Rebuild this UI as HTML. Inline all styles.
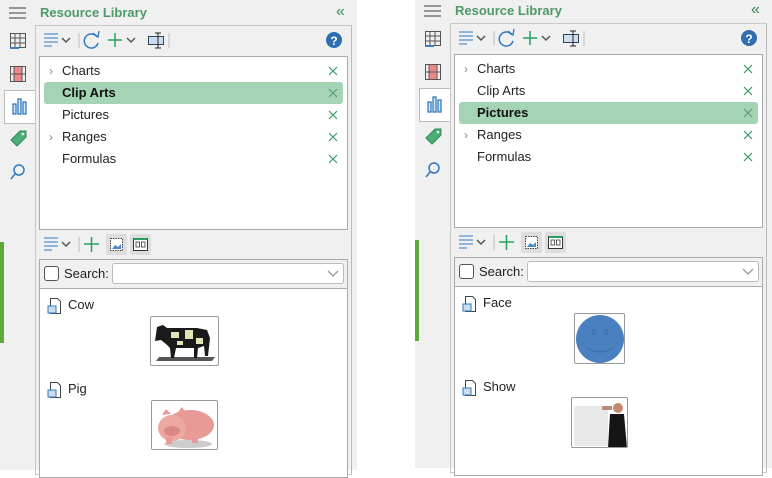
<!DOCTYPE html><html><head><style>
*{margin:0;padding:0;box-sizing:border-box}
body{width:772px;height:464px;background:#fff;position:relative;overflow:hidden;font-family:"Liberation Sans",sans-serif;font-size:13px;color:#222}
.p{position:absolute;width:357px;height:470px;background:#f0f0f0}
.a{position:absolute}
.tl{left:40px;top:5px;color:#4c9a68;font-weight:bold;font-size:13px}
.box{position:absolute;left:35px;top:25px;width:317px;height:450px;border:1px solid #c8c8c8;border-right:1px solid #bbb}
.list{position:absolute;left:39px;top:56px;width:309px;height:174px;background:#fff;border:1px solid #aaa}
.row{position:absolute;left:4px;width:299px;height:22px;line-height:22px;padding-left:18px}
.row.sel{background:#a4d4b4;border-radius:3px;font-weight:bold;color:#111}
.x{position:absolute;right:5px;top:6px;width:10px;height:10px}
.chev{position:absolute;left:5px;top:0;color:#888;font-size:12px}
.srch{position:absolute;left:39px;top:259px;width:309px;height:30px;border:1px solid #aaa;background:#f0f0f0}
.cont{position:absolute;left:39px;top:288px;width:309px;height:190px;background:#fff;border:1px solid #aaa}
.img{position:absolute;border:1px solid #999;border-radius:2px;background:#fff;overflow:hidden}
</style></head><body>

<div class="p" style="left:0;top:0">
<svg class="a" style="left:0;top:0" width="40" height="200">
<g stroke="#777" stroke-width="1.6"><line x1="9" y1="8" x2="26" y2="8"/><line x1="9" y1="13" x2="26" y2="13"/><line x1="9" y1="18" x2="26" y2="18"/></g>
<g fill="none" stroke="#555" stroke-width="1"><rect x="10.5" y="33.5" width="15" height="14"/><path d="M10.5 38h15M10.5 43h15M15 33.5v14M20 33.5v14"/></g><path d="M10 48h9" stroke="#3a7fc4" stroke-width="2"/>
<rect x="10.5" y="66.5" width="15" height="15" fill="none" stroke="#555"/><rect x="14" y="67" width="8" height="14" fill="#e88"/><path d="M14 67v14M22 67v14M10.5 74h15" stroke="#555"/>
</svg>
<div class="a" style="left:4px;top:90px;width:32px;height:34px;background:#fff;border:1px solid #bbb;border-right:none"></div>
<svg class="a" style="left:0;top:0" width="40" height="200">
<g fill="#dce9f5" stroke="#2f7ac0" stroke-width="1.3"><rect x="13" y="104" width="3" height="10"/><rect x="18" y="99" width="3" height="15"/><rect x="23" y="102" width="3" height="12"/></g>
<path d="M11 140l9-9h6v6l-9 9z" fill="#4cae76" stroke="#2e8a57"/><circle cx="23" cy="134" r="1.3" fill="#fff"/>
<circle cx="19" cy="170" r="5" fill="none" stroke="#2f7ac0" stroke-width="1.5"/><path d="M15 174l-4 5" stroke="#2f7ac0" stroke-width="1.5"/>
</svg>
<div class="a" style="left:0;top:242px;width:4px;height:101px;background:#5fa83a"></div>
<div class="tl a">Resource Library</div>
<div class="a" style="left:336px;top:3px;color:#3a8a5a;font-size:16px">«</div>
<div class="box"></div>
<svg class="a" style="left:36px;top:28px" width="315" height="26">
<g stroke="#2f7ac0" stroke-width="1"><path d="M8 6h14M8 10h14M8 14h14M8 18h8"/></g><path d="M26 10l4 4 4-4" fill="none" stroke="#555" stroke-width="1.5"/>
<path d="M43 5v15" stroke="#bbb"/>
<path d="M61 9a7 7 0 1 0 1 6" fill="none" stroke="#2f7ac0" stroke-width="1.5"/><path d="M57 5l5 4 1-6" fill="none" stroke="#2f7ac0" stroke-width="1.3"/>
<path d="M72 12h14M79 5v14" stroke="#2aa060" stroke-width="1.5"/><path d="M91 10l4 4 4-4" fill="none" stroke="#555" stroke-width="1.5"/>
<rect x="112.5" y="8.5" width="15" height="8" fill="#cde" stroke="#345"/><path d="M122 5v15M119 5h6M119 20h6" stroke="#222"/>
<path d="M133 5v15" stroke="#bbb"/>
<circle cx="298" cy="12" r="8" fill="#2f6eb0"/><text x="298" y="17" font-size="12" font-weight="bold" fill="#fff" text-anchor="middle" font-family="Liberation Sans">?</text>
</svg>
<div class="list">
<div class="row" style="top:3px"><span class="chev">›</span>Charts<svg class="x"><path d="M1 1l8 8M9 1l-8 8" stroke="#3a9a6a" stroke-width="1.2"/></svg></div>
<div class="row sel" style="top:25px">Clip Arts<svg class="x"><path d="M1 1l8 8M9 1l-8 8" stroke="#5a9a78" stroke-width="1.2"/></svg></div>
<div class="row" style="top:47px">Pictures<svg class="x"><path d="M1 1l8 8M9 1l-8 8" stroke="#3a9a6a" stroke-width="1.2"/></svg></div>
<div class="row" style="top:69px"><span class="chev">›</span>Ranges<svg class="x"><path d="M1 1l8 8M9 1l-8 8" stroke="#3a9a6a" stroke-width="1.2"/></svg></div>
<div class="row" style="top:91px">Formulas<svg class="x"><path d="M1 1l8 8M9 1l-8 8" stroke="#3a9a6a" stroke-width="1.2"/></svg></div>
</div>
<svg class="a" style="left:36px;top:232px" width="120" height="26">
<g stroke="#2f7ac0" stroke-width="1"><path d="M8 6h14M8 10h14M8 14h14M8 18h8"/></g><path d="M26 10l4 4 4-4" fill="none" stroke="#555" stroke-width="1.5"/>
<path d="M43 5v15" stroke="#bbb"/><path d="M48 12h15M55.5 5v15" stroke="#2aa060" stroke-width="1.5"/>
<rect x="70" y="2" width="21" height="21" rx="2" fill="#ddd"/><rect x="74.5" y="6.5" width="12" height="12" fill="#fff" stroke="#444" stroke-dasharray="1.5 1"/><path d="M76 17l3-4 3 2 3-3v5z" fill="#4a8ac8"/>
<rect x="94" y="2" width="21" height="21" rx="2" fill="#ddd"/><rect x="97.5" y="6.5" width="14" height="12" fill="#fff" stroke="#333"/><path d="M97.5 7h14" stroke="#2aa060" stroke-width="2"/><rect x="100" y="10" width="3.5" height="5" fill="none" stroke="#333" stroke-width=".8"/><rect x="105.5" y="10" width="3.5" height="5" fill="none" stroke="#333" stroke-width=".8"/>
</svg>
<div class="srch">
<div class="a" style="left:4px;top:6px;width:15px;height:15px;border:1px solid #555;border-radius:3px;background:#fff"></div>
<div class="a" style="left:24px;top:6px">Search:</div>
<div class="a" style="left:72px;top:3px;width:232px;height:21px;border:1px solid #bbb;border-radius:3px;background:#fff"><svg class="a" style="right:4px;top:6px" width="12" height="8"><path d="M1 1l5 5 5-5" fill="none" stroke="#999" stroke-width="1.3"/></svg></div>
</div>
<div class="cont">
<svg class="a" style="left:7px;top:8px" width="18" height="18"><path d="M3.5 1.5h7l3 3v12h-10z" fill="#fff" stroke="#444"/><rect x="1" y="9" width="8" height="7" fill="#cde" stroke="#2f7ac0"/></svg>
<div class="a" style="left:28px;top:8px">Cow</div>
<div class="img" style="left:110px;top:27px;width:69px;height:50px">
<svg width="69" height="50"><path d="M8 40h56l-3 4H5z" fill="#555"/><path d="M6 10l6-2 4 3h30l10 2 3 8-2 18h-3l-1-10-6 2-1 10h-3v-10h-18l-2 10h-3l-1-10-4-4-5-4-6 1z" fill="#1a1a1a"/><path d="M20 15h8v6h-8zM34 13h8v9h-8zM45 21h7v6h-7zM26 24h6v4h-6z" fill="#e2e4b8"/></svg></div>
<svg class="a" style="left:7px;top:92px" width="18" height="18"><path d="M3.5 1.5h7l3 3v12h-10z" fill="#fff" stroke="#444"/><rect x="1" y="9" width="8" height="7" fill="#cde" stroke="#2f7ac0"/></svg>
<div class="a" style="left:28px;top:92px">Pig</div>
<div class="img" style="left:111px;top:111px;width:67px;height:50px">
<svg width="67" height="50"><ellipse cx="36" cy="43" rx="24" ry="4" fill="#ccc"/><ellipse cx="38" cy="24" rx="24" ry="15" fill="#e99a96"/><ellipse cx="20" cy="27" rx="14" ry="13" fill="#eda8a2"/><ellipse cx="20" cy="30" rx="8" ry="5" fill="#d98884"/><path d="M10 14l4-6 5 5zM26 11l4-5 4 6z" fill="#e99a96"/><rect x="14" y="36" width="6" height="7" fill="#e99a96"/><rect x="40" y="35" width="6" height="7" fill="#e99a96"/></svg></div>
</div>
</div>

<div class="p" style="left:415px;top:-2px">
<svg class="a" style="left:0;top:0" width="40" height="200">
<g stroke="#777" stroke-width="1.6"><line x1="9" y1="8" x2="26" y2="8"/><line x1="9" y1="13" x2="26" y2="13"/><line x1="9" y1="18" x2="26" y2="18"/></g>
<g fill="none" stroke="#555" stroke-width="1"><rect x="10.5" y="33.5" width="15" height="14"/><path d="M10.5 38h15M10.5 43h15M15 33.5v14M20 33.5v14"/></g><path d="M10 48h9" stroke="#3a7fc4" stroke-width="2"/>
<rect x="10.5" y="66.5" width="15" height="15" fill="none" stroke="#555"/><rect x="14" y="67" width="8" height="14" fill="#e88"/><path d="M14 67v14M22 67v14M10.5 74h15" stroke="#555"/>
</svg>
<div class="a" style="left:4px;top:90px;width:32px;height:34px;background:#fff;border:1px solid #bbb;border-right:none"></div>
<svg class="a" style="left:0;top:0" width="40" height="200">
<g fill="#dce9f5" stroke="#2f7ac0" stroke-width="1.3"><rect x="13" y="104" width="3" height="10"/><rect x="18" y="99" width="3" height="15"/><rect x="23" y="102" width="3" height="12"/></g>
<path d="M11 140l9-9h6v6l-9 9z" fill="#4cae76" stroke="#2e8a57"/><circle cx="23" cy="134" r="1.3" fill="#fff"/>
<circle cx="19" cy="170" r="5" fill="none" stroke="#2f7ac0" stroke-width="1.5"/><path d="M15 174l-4 5" stroke="#2f7ac0" stroke-width="1.5"/>
</svg>
<div class="a" style="left:0;top:242px;width:4px;height:101px;background:#5fa83a"></div>
<div class="tl a">Resource Library</div>
<div class="a" style="left:336px;top:3px;color:#3a8a5a;font-size:16px">«</div>
<div class="box"></div>
<svg class="a" style="left:36px;top:28px" width="315" height="26">
<g stroke="#2f7ac0" stroke-width="1"><path d="M8 6h14M8 10h14M8 14h14M8 18h8"/></g><path d="M26 10l4 4 4-4" fill="none" stroke="#555" stroke-width="1.5"/>
<path d="M43 5v15" stroke="#bbb"/>
<path d="M61 9a7 7 0 1 0 1 6" fill="none" stroke="#2f7ac0" stroke-width="1.5"/><path d="M57 5l5 4 1-6" fill="none" stroke="#2f7ac0" stroke-width="1.3"/>
<path d="M72 12h14M79 5v14" stroke="#2aa060" stroke-width="1.5"/><path d="M91 10l4 4 4-4" fill="none" stroke="#555" stroke-width="1.5"/>
<rect x="112.5" y="8.5" width="15" height="8" fill="#cde" stroke="#345"/><path d="M122 5v15M119 5h6M119 20h6" stroke="#222"/>
<path d="M133 5v15" stroke="#bbb"/>
<circle cx="298" cy="12" r="8" fill="#2f6eb0"/><text x="298" y="17" font-size="12" font-weight="bold" fill="#fff" text-anchor="middle" font-family="Liberation Sans">?</text>
</svg>
<div class="list">
<div class="row" style="top:3px"><span class="chev">›</span>Charts<svg class="x"><path d="M1 1l8 8M9 1l-8 8" stroke="#3a9a6a" stroke-width="1.2"/></svg></div>
<div class="row" style="top:25px">Clip Arts<svg class="x"><path d="M1 1l8 8M9 1l-8 8" stroke="#3a9a6a" stroke-width="1.2"/></svg></div>
<div class="row sel" style="top:47px">Pictures<svg class="x"><path d="M1 1l8 8M9 1l-8 8" stroke="#5a9a78" stroke-width="1.2"/></svg></div>
<div class="row" style="top:69px"><span class="chev">›</span>Ranges<svg class="x"><path d="M1 1l8 8M9 1l-8 8" stroke="#3a9a6a" stroke-width="1.2"/></svg></div>
<div class="row" style="top:91px">Formulas<svg class="x"><path d="M1 1l8 8M9 1l-8 8" stroke="#3a9a6a" stroke-width="1.2"/></svg></div>
</div>
<svg class="a" style="left:36px;top:232px" width="120" height="26">
<g stroke="#2f7ac0" stroke-width="1"><path d="M8 6h14M8 10h14M8 14h14M8 18h8"/></g><path d="M26 10l4 4 4-4" fill="none" stroke="#555" stroke-width="1.5"/>
<path d="M43 5v15" stroke="#bbb"/><path d="M48 12h15M55.5 5v15" stroke="#2aa060" stroke-width="1.5"/>
<rect x="70" y="2" width="21" height="21" rx="2" fill="#ddd"/><rect x="74.5" y="6.5" width="12" height="12" fill="#fff" stroke="#444" stroke-dasharray="1.5 1"/><path d="M76 17l3-4 3 2 3-3v5z" fill="#4a8ac8"/>
<rect x="94" y="2" width="21" height="21" rx="2" fill="#ddd"/><rect x="97.5" y="6.5" width="14" height="12" fill="#fff" stroke="#333"/><path d="M97.5 7h14" stroke="#2aa060" stroke-width="2"/><rect x="100" y="10" width="3.5" height="5" fill="none" stroke="#333" stroke-width=".8"/><rect x="105.5" y="10" width="3.5" height="5" fill="none" stroke="#333" stroke-width=".8"/>
</svg>
<div class="srch">
<div class="a" style="left:4px;top:6px;width:15px;height:15px;border:1px solid #555;border-radius:3px;background:#fff"></div>
<div class="a" style="left:24px;top:6px">Search:</div>
<div class="a" style="left:72px;top:3px;width:232px;height:21px;border:1px solid #bbb;border-radius:3px;background:#fff"><svg class="a" style="right:4px;top:6px" width="12" height="8"><path d="M1 1l5 5 5-5" fill="none" stroke="#999" stroke-width="1.3"/></svg></div>
</div>
<div class="cont">
<svg class="a" style="left:7px;top:8px" width="18" height="18"><path d="M3.5 1.5h7l3 3v12h-10z" fill="#fff" stroke="#444"/><rect x="1" y="9" width="8" height="7" fill="#cde" stroke="#2f7ac0"/></svg>
<div class="a" style="left:28px;top:8px">Face</div>
<div class="img" style="left:119px;top:26px;width:51px;height:51px">
<svg width="51" height="51"><circle cx="25" cy="25" r="24" fill="#4a7fc0"/><circle cx="19" cy="18" r="2" fill="none" stroke="#3a6aa8"/><circle cx="31" cy="18" r="2" fill="none" stroke="#3a6aa8"/><path d="M12 34q13 8 26 0" fill="none" stroke="#3a6aa8"/></svg></div>
<svg class="a" style="left:7px;top:92px" width="18" height="18"><path d="M3.5 1.5h7l3 3v12h-10z" fill="#fff" stroke="#444"/><rect x="1" y="9" width="8" height="7" fill="#cde" stroke="#2f7ac0"/></svg>
<div class="a" style="left:28px;top:92px">Show</div>
<div class="img" style="left:116px;top:110px;width:57px;height:51px">
<svg width="57" height="51"><rect x="2" y="8" width="34" height="40" fill="#e8e8e8"/><circle cx="46" cy="10" r="5" fill="#c08a70"/><path d="M38 16h14l3 34H36z" fill="#151515"/><path d="M30 8h10v4H30z" fill="#c08a70"/></svg></div>
</div>
</div>
</body></html>
